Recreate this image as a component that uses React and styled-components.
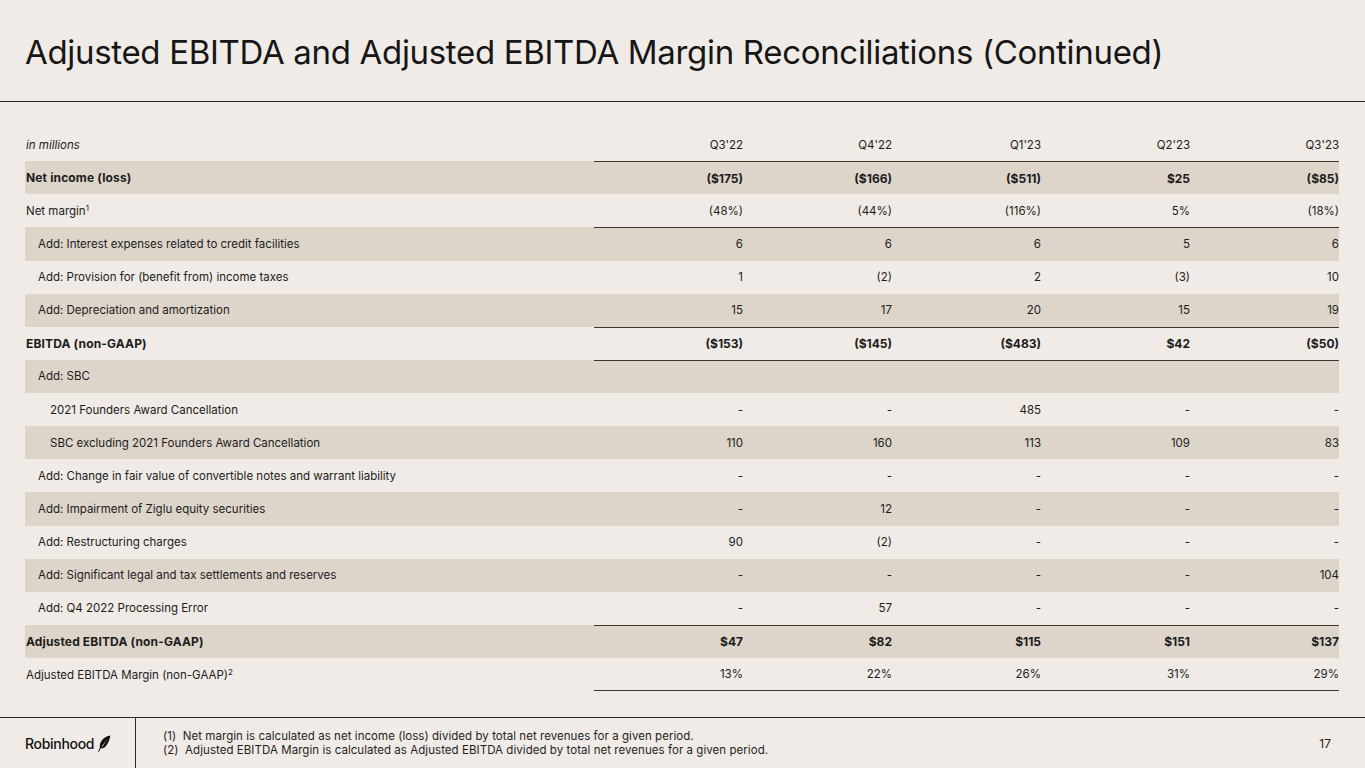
import React from 'react';
import styled, { createGlobalStyle } from 'styled-components';

const GlobalStyle = createGlobalStyle`
  html, body {
    margin: 0;
    padding: 0;
    background: #f0ebe6;
  }
  body {
    font-family: "Inter", "Liberation Sans", sans-serif;
    color: #1c1c1c;
  }
`;

const Slide = styled.div`
  width: 1365px;
  height: 768px;
  display: flex;
  flex-direction: column;
  background: #f0ebe6;
  overflow: hidden;
`;

const Header = styled.header`
  height: 102px;
  box-sizing: border-box;
  border-bottom: 1px solid #2a2a2a;
  display: flex;
  align-items: center;
  padding: 2px 0 0 25px;
`;

const Title = styled.h1`
  margin: 0;
  font-size: 33px;
  font-weight: 400;
  letter-spacing: -0.32px;
  color: #161616;
`;

const Main = styled.main`
  flex: 1;
  padding: 26px 26px 0 25px;
`;

const Table = styled.div`
  display: grid;
  grid-template-columns: 569px repeat(5, 149px);
  grid-auto-rows: 33.125px;
`;

const Row = styled.div`
  display: contents;
`;

const Cell = styled.div`
  box-sizing: border-box;
  display: flex;
  align-items: center;
  font-size: ${p => (p.$bold ? '12px' : '11.5px')};
  font-weight: ${p => (p.$bold ? 700 : 400)};
  letter-spacing: ${p => (p.$bold ? '0.15px' : '0')};
  background: ${p => (p.$shade ? '#ddd4ca' : 'transparent')};
`;

const Label = styled(Cell)`
  padding-left: ${p => p.$indent * 12 + 1}px;
  font-style: ${p => (p.$italic ? 'italic' : 'normal')};
`;

const Value = styled(Cell)`
  justify-content: flex-end;
  letter-spacing: 0;
  border-top: ${p => (p.$ruleTop ? '1.5px solid #3a3632' : 'none')};
  border-bottom: ${p => (p.$ruleBottom ? '1.5px solid #3a3632' : 'none')};
`;

const Sup = styled.sup`
  font-size: 8px;
  line-height: 0;
  vertical-align: 4px;
`;

const Footer = styled.footer`
  height: 51px;
  box-sizing: border-box;
  border-top: 1px solid #2a2a2a;
  display: flex;
  align-items: stretch;
`;

const LogoCell = styled.div`
  width: 136px;
  box-sizing: border-box;
  border-right: 1px solid #2a2a2a;
  display: flex;
  align-items: center;
  padding-left: 25px;
  gap: 3px;
`;

const LogoText = styled.span`
  font-size: 14px;
  font-weight: 500;
  letter-spacing: -0.3px;
  color: #111;
`;

const Notes = styled.div`
  flex: 1;
  display: flex;
  flex-direction: column;
  justify-content: center;
  padding-left: 27px;
  font-size: 11.5px;
  line-height: 14px;
  letter-spacing: 0.05px;
  color: #1f1f1f;
`;

const Note = styled.div`
  white-space: pre;
`;

const PageNum = styled.div`
  width: 60px;
  display: flex;
  align-items: center;
  justify-content: flex-end;
  padding-right: 34px;
  font-size: 12px;
  color: #1f1f1f;
`;

const Feather = () => (
  <svg width="14" height="17" viewBox="0 0 14 17">
    <path
      d="M13.4 0.6 C9.2 1.2 5.4 3.6 3.6 7.6 C2.8 9.4 2.6 11.2 3 12.6 L1 16.4 L1.9 16.8 L3.8 13.2 C5.6 13.6 7.6 12.8 9 11 C11.4 8 12.8 4.2 13.4 0.6 Z M4.6 11.6 L10.8 3.4 L5.2 11.9 Z"
      fill="#111"
      fillRule="evenodd"
    />
  </svg>
);

const quarters = ["Q3'22", "Q4'22", "Q1'23", "Q2'23", "Q3'23"];

const rows = [
  { label: 'Net income (loss)', values: ['($175)', '($166)', '($511)', '$25', '($85)'], bold: true, ruleTop: true },
  { label: 'Net margin', sup: '1', values: ['(48%)', '(44%)', '(116%)', '5%', '(18%)'] },
  { label: 'Add: Interest expenses related to credit facilities', indent: 1, values: ['6', '6', '6', '5', '6'], ruleTop: true },
  { label: 'Add: Provision for (benefit from) income taxes', indent: 1, values: ['1', '(2)', '2', '(3)', '10'] },
  { label: 'Add: Depreciation and amortization', indent: 1, values: ['15', '17', '20', '15', '19'] },
  { label: 'EBITDA (non-GAAP)', values: ['($153)', '($145)', '($483)', '$42', '($50)'], bold: true, ruleTop: true },
  { label: 'Add: SBC', indent: 1, values: ['', '', '', '', ''], ruleTop: true },
  { label: '2021 Founders Award Cancellation', indent: 2, values: ['-', '-', '485', '-', '-'] },
  { label: 'SBC excluding 2021 Founders Award Cancellation', indent: 2, values: ['110', '160', '113', '109', '83'] },
  { label: 'Add: Change in fair value of convertible notes and warrant liability', indent: 1, values: ['-', '-', '-', '-', '-'] },
  { label: 'Add: Impairment of Ziglu equity securities', indent: 1, values: ['-', '12', '-', '-', '-'] },
  { label: 'Add: Restructuring charges', indent: 1, values: ['90', '(2)', '-', '-', '-'] },
  { label: 'Add: Significant legal and tax settlements and reserves', indent: 1, values: ['-', '-', '-', '-', '104'] },
  { label: 'Add: Q4 2022 Processing Error', indent: 1, values: ['-', '57', '-', '-', '-'] },
  { label: 'Adjusted EBITDA (non-GAAP)', values: ['$47', '$82', '$115', '$151', '$137'], bold: true, ruleTop: true },
  { label: 'Adjusted EBITDA Margin (non-GAAP)', sup: '2', values: ['13%', '22%', '26%', '31%', '29%'], ruleBottom: true },
];

const App = () => (
  <>
    <GlobalStyle />
    <Slide>
      <Header>
        <Title>Adjusted EBITDA and Adjusted EBITDA Margin Reconciliations (Continued)</Title>
      </Header>
      <Main>
        <Table>
          <Row>
            <Label $indent={0} $italic>in millions</Label>
            {quarters.map(q => (
              <Value key={q}>{q}</Value>
            ))}
          </Row>
          {rows.map((r, i) => {
            const shade = i % 2 === 0;
            return (
              <Row key={r.label}>
                <Label $indent={r.indent || 0} $bold={r.bold} $shade={shade}>
                  <span>
                    {r.label}
                    {r.sup && <Sup>{r.sup}</Sup>}
                  </span>
                </Label>
                {r.values.map((v, j) => (
                  <Value
                    key={j}
                    $bold={r.bold}
                    $shade={shade}
                    $ruleTop={r.ruleTop}
                    $ruleBottom={r.ruleBottom}
                  >
                    {v}
                  </Value>
                ))}
              </Row>
            );
          })}
        </Table>
      </Main>
      <Footer>
        <LogoCell>
          <LogoText>Robinhood</LogoText>
          <Feather />
        </LogoCell>
        <Notes>
          <Note>(1)  Net margin is calculated as net income (loss) divided by total net revenues for a given period.</Note>
          <Note>(2)  Adjusted EBITDA Margin is calculated as Adjusted EBITDA divided by total net revenues for a given period.</Note>
        </Notes>
        <PageNum>17</PageNum>
      </Footer>
    </Slide>
  </>
);

export default App;
